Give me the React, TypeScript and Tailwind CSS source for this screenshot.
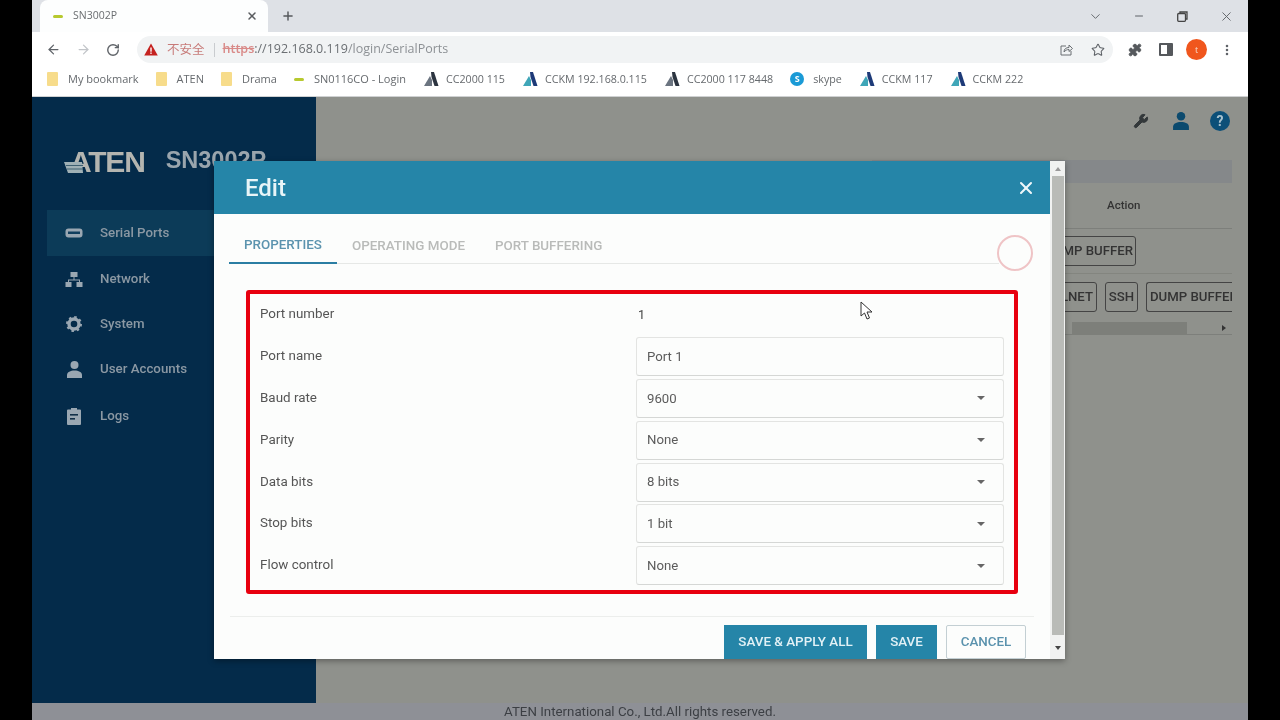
import { ArrowLeft, ArrowRight, RotateCw, Star, Puzzle, X, Plus, ChevronDown, Minus, MoreVertical, Wrench } from "lucide-react";

function Folder() {
  return <span className="w-[11px] h-[14px] bg-[#f7dc8b] rounded-[1px] shrink-0" />;
}
function Favicon() {
  return <span className="w-[10px] h-[3px] bg-[#b7c92f] rounded-sm shrink-0" />;
}
function AtenMark({ dark }: { dark?: boolean }) {
  return (
    <svg width="16" height="14" viewBox="0 0 16 14" className="shrink-0 -mr-[3px]">
      <path d="M8 0 L11 0 L15.5 14 L11.5 14 L8.5 5 Z" fill={dark ? "#2c3440" : "#1d3a78"} />
      <path d="M7 4 L1 14 L9 14 L9 8 Z" fill={dark ? "#6b7480" : "#3fa6b8"} />
    </svg>
  );
}
function Bookmark({ icon, label, large }: { icon: React.ReactNode; label: string; large?: boolean }) {
  return (
    <div className={`flex items-center gap-[10px] text-[#666a6e] whitespace-nowrap ${large ? "text-[11px]" : "text-[10.7px]"}`}>
      {icon}
      <span>{label}</span>
    </div>
  );
}
function SerialIcon() {
  return (
    <svg width="18" height="10" viewBox="0 0 18 10">
      <rect x="0.5" y="0.5" width="17" height="9" rx="3" fill="#9aa7b2" />
      <rect x="3" y="3.5" width="12" height="2.5" fill="#123f5e" />
    </svg>
  );
}
function NetworkIcon() {
  return (
    <svg width="18" height="15" viewBox="0 0 18 15" fill="#9aa7b2">
      <rect x="5.5" y="0" width="7" height="5" />
      <rect x="0.5" y="10" width="6" height="5" />
      <rect x="11.5" y="10" width="6" height="5" />
      <path d="M8.5 5h1v2.500H15V10h-1V8.500H4V10H3V7.500h5.500z" />
    </svg>
  );
}
function GearIcon() {
  return (
    <svg width="16" height="16" viewBox="0 0 16 16">
      <circle cx="8" cy="8" r="5" fill="none" stroke="#9aa7b2" strokeWidth="3.4" />
      <circle cx="8" cy="8" r="7" fill="none" stroke="#9aa7b2" strokeWidth="2" strokeDasharray="2.5 3" />
    </svg>
  );
}
function PersonIcon({ color, w, h }: { color: string; w: number; h: number }) {
  return (
    <svg width={w} height={h} viewBox="0 0 15 17" fill={color}>
      <circle cx="7.500" cy="4" r="4" />
      <path d="M0 17v-3c0-3 3.500-4.500 7.500-4.500S15 11 15 14v3z" />
    </svg>
  );
}
function LogIcon() {
  return (
    <svg width="14" height="18" viewBox="0 0 14 18">
      <path d="M1 2.500h3V1h6v1.500h3a1 1 0 0 1 1 1V17a1 1 0 0 1-1 1H1a1 1 0 0 1-1-1V3.500a1 1 0 0 1 1-1z" fill="#9aa7b2" />
      <rect x="3" y="7" width="8" height="1.600" fill="#123049" />
      <rect x="3" y="11" width="5" height="1.600" fill="#123049" />
    </svg>
  );
}
function NavItem({ icon, label, active, cls }: { icon: React.ReactNode; label: string; active?: boolean; cls: string }) {
  return (
    <div className={`flex items-center h-[46px] pl-[18px] ${cls} ${active ? "bg-[#0c3b58]" : ""}`}>
      <span className="w-[18px] flex justify-center">{icon}</span>
      <span className="ml-[17px] text-[13.3px] text-[#8b98a3] font-medium whitespace-nowrap">{label}</span>
    </div>
  );
}
function Field({ label, value, select, input }: { label: string; value: string; select?: boolean; input?: boolean }) {
  return (
    <div className="flex items-center h-[41.8px]">
      <span className="w-[376px] text-[13.4px] text-[#555] -mt-[1px]">{label}</span>
      {input || select ? (
        <div className="w-[368px] h-[39px] border border-[#e3e4e2] border-b-[#d5d7d5] rounded-[3px] flex items-center pl-[10px] pr-[18px] text-[13.2px] text-[#5c5c5c] justify-between">
          <span>{value}</span>
          {select && <span className="w-0 h-0 border-x-[4px] border-x-transparent border-t-[4px] border-t-[#666]" />}
        </div>
      ) : (
        <span className="text-[12.5px] text-[#444] ml-[2px]">{value}</span>
      )}
    </div>
  );
}

export default function App() {
  return (
    <div className="w-[1280px] h-[720px] bg-black overflow-hidden flex justify-center blur-[0.5px] font-['Roboto',sans-serif]">
      <div className="w-[1216px] h-full flex flex-col relative overflow-hidden">
        {/* tab strip */}
        <div className="h-[32px] bg-[#dee1e6] flex items-end shrink-0 font-['Open_Sans',sans-serif]">
          <div className="w-[228px] h-[32px] ml-[8px] bg-[#fdfefe] rounded-t-lg flex items-center pl-[13px] pr-[10px]">
            <Favicon />
            <span className="ml-[10px] text-[10.5px] text-[#6a6d70]">SN3002P</span>
            <X size={12} strokeWidth={3} className="ml-auto text-[#5a5d60]" />
          </div>
          <Plus size={14} strokeWidth={2.5} className="ml-[13px] mb-[9px] text-[#55585c]" />
          <div className="ml-auto flex items-center h-[32px] text-[#5f6368]">
            <ChevronDown size={15} strokeWidth={1.5} className="mr-[30px]" />
            <Minus size={12} strokeWidth={2} className="mr-[32px]" />
            <svg width="11" height="11" viewBox="0 0 11 11" fill="none" stroke="#444" strokeWidth="1.300" className="mr-[31px]">
              <rect x="0.700" y="2.500" width="7.800" height="7.800" rx="1" />
              <path d="M3 2.500V1h7v7H8.500" />
            </svg>
            <X size={15} strokeWidth={1.5} className="mr-[14px]" />
          </div>
        </div>
        {/* toolbar */}
        <div className="h-[32px] pt-[3px] bg-white flex items-center shrink-0 pl-[14px] font-['Open_Sans',sans-serif]">
          <ArrowLeft size={15} strokeWidth={2} className="text-[#5f6368]" />
          <ArrowRight size={15} strokeWidth={2} className="ml-[15px] text-[#c2c5c9]" />
          <RotateCw size={14} strokeWidth={2.4} className="ml-[15px] text-[#5f6368]" />
          <div className="ml-[17px] w-[976px] h-[27px] bg-[#f1f3f4] rounded-full flex items-center pl-[7px]">
            <svg width="14" height="13" viewBox="0 0 14 13"><path d="M7 0.500L13.800 12.500H0.200z" fill="#c5221f" /><rect x="6.300" y="4.500" width="1.400" height="4.200" fill="#fff" /><rect x="6.300" y="9.500" width="1.400" height="1.400" fill="#fff" /></svg>
            <span className="ml-[9px] text-[12.5px] text-[#c77a78] font-['Noto_Sans_CJK_SC',sans-serif]">不安全</span>
            <span className="ml-[9px] w-px h-[14px] bg-[#c9cccf]" />
            <span className="ml-[8px] text-[12.5px] whitespace-nowrap">
              <span className="text-[#d98a88] line-through font-semibold">https</span>
              <span className="text-[#6b6f73]">://192.168.0.119</span>
              <span className="text-[#8d9195]">/login/SerialPorts</span>
            </span>
            <svg width="13" height="13" viewBox="0 0 13 13" fill="none" stroke="#6b6f73" strokeWidth="1" className="ml-auto">
              <path d="M6 3H1v9h10V8" />
              <path d="M4 9c0-3 2-4.500 5-4.500V2l3.500 3.500L9 8.500V6.500C7 6.500 5.500 7.300 4 9z" />
            </svg>
            <Star size={14} strokeWidth={1.8} className="ml-[18px] mr-[8px] text-[#5f6368]" />
          </div>
          <Puzzle size={14} fill="#55585c" strokeWidth={1.500} className="ml-[15px] text-[#55585c]" />
          <span className="ml-[17px] w-[14px] h-[13px] border-2 border-[#55585c] border-r-[6px] rounded-[1px]" />
          <span className="ml-[13px] w-[21px] h-[21px] rounded-full bg-[#f0561d] flex items-center justify-center text-[9px] text-[#f7d9c8]">t</span>
          <MoreVertical size={14} strokeWidth={2.4} className="ml-[13px] text-[#5f6368]" />
        </div>
        {/* bookmarks */}
        <div className="h-[33px] pb-[2px] bg-white flex items-center shrink-0 pl-[15px] gap-[17px] border-b border-[#cfd1d2] font-['Open_Sans',sans-serif]">
          <Bookmark large icon={<Folder />} label="My bookmark" />
          <Bookmark large icon={<Folder />} label="ATEN" />
          <Bookmark large icon={<Folder />} label="Drama" />
          <Bookmark large icon={<Favicon />} label="SN0116CO - Login" />
          <Bookmark icon={<AtenMark dark />} label="CC2000 115" />
          <Bookmark icon={<AtenMark />} label="CCKM 192.168.0.115" />
          <Bookmark icon={<AtenMark dark />} label="CC2000 117 8448" />
          <Bookmark icon={<span className="w-[14px] h-[14px] -mr-[1px] rounded-full bg-[#1a9ad6] text-white text-[9px] font-bold flex items-center justify-center">S</span>} label="skype" />
          <Bookmark icon={<AtenMark />} label="CCKM 117" />
          <Bookmark icon={<AtenMark />} label="CCKM 222" />
        </div>
        {/* page */}
        <div className="flex-1 flex flex-col min-h-0 relative">
          <div className="flex-1 flex min-h-0">
            <aside className="w-[284px] bg-[#042b4a] shrink-0 pt-[46px]">
              <div className="flex items-center pl-[32px] h-[36px] whitespace-nowrap relative">
                <span className="ml-[6px] text-[30px] font-bold tracking-[-1.2px] text-[#b4b5b0] font-['Liberation_Sans',sans-serif]">ATEN</span>
                <span className="ml-[21px] text-[23.5px] font-bold text-[#9aa5ad] font-['Liberation_Sans',sans-serif]">SN3002P</span>
                <svg width="22" height="11" viewBox="0 0 22 11" className="absolute left-[32px] top-[19px]">
                  <path d="M0 0H18L19 11H4z" fill="#9fb0b5" />
                  <path d="M2 3.500H19M3 7H19" stroke="#3f6071" strokeWidth="1" />
                </svg>
              </div>
              <div className="mt-[31px] ml-[15px] flex flex-col">
                <NavItem cls="" active icon={<SerialIcon />} label="Serial Ports" />
                <NavItem cls="" icon={<NetworkIcon />} label="Network" />
                <NavItem cls="-mt-[1px]" icon={<GearIcon />} label="System" />
                <NavItem cls="-mt-[1px]" icon={<PersonIcon color="#9aa7b2" w={15} h={17} />} label="User Accounts" />
                <NavItem cls="mt-[1px]" icon={<LogIcon />} label="Logs" />
              </div>
            </aside>
            <main className="flex-1 bg-[#8f918c] flex flex-col min-w-0">
              <div className="h-[48px] flex items-center justify-end pr-[18px] shrink-0">
                <Wrench size={16} fill="#33383a" strokeWidth={1.500} className="text-[#33383a]" />
                <span className="ml-[23px]"><PersonIcon color="#0c4a6e" w={18} h={18} /></span>
                <span className="ml-[20px] w-[20px] h-[20px] rounded-full bg-[#0c4f78] flex items-center justify-center text-[14px] font-bold text-[#a9c2cf]">?</span>
              </div>
              <div className="flex-1 flex flex-col items-end pr-[16px] pt-[15px]">
                <div className="w-[360px] shrink-0 flex flex-col overflow-hidden text-[#333] font-medium">
                  <div className="h-[23px] bg-[#85888a] shrink-0" />
                  <div className="h-[46px] border-b border-[#7d7f7b] flex items-center text-[11.5px] pl-[235px]">Action</div>
                  <div className="h-[45px] border-b border-[#83857f] flex items-center pl-[164px] text-[13.2px] whitespace-nowrap">
                    <span className="h-[30px] w-[100px] border border-[#444] rounded-[3px] flex items-center justify-end pr-[2px]">DUMP BUFFER</span>
                  </div>
                  <div className="h-[48px] pb-[3px] flex items-center pl-[179px] gap-[8px] text-[13.2px] whitespace-nowrap">
                    <span className="h-[30px] w-[46px] border border-[#444] rounded-[3px] flex items-center justify-end pr-[3px] shrink-0">TELNET</span>
                    <span className="h-[30px] w-[33px] border border-[#444] rounded-[3px] flex items-center justify-center shrink-0">SSH</span>
                    <span className="h-[30px] w-[86px] pl-[3px] border border-[#444] rounded-l-[3px] border-r-0 flex items-center overflow-hidden shrink-0">DUMP BUFFER</span>
                  </div>
                  <div className="h-[13px] flex items-center border-b border-[#7d7f7b] shrink-0">
                    <div className="ml-[200px] w-[115px] h-[13px] bg-[#7d7f7a]" />
                    <span className="ml-auto mr-[6px] w-0 h-0 border-y-[3px] border-y-transparent border-l-[4px] border-l-[#333]" />
                  </div>
                </div>
              </div>
            </main>
          </div>
          <div className="h-[17px] bg-[#8e9096] flex items-center justify-center text-[13.3px] text-[#3c3f44] whitespace-nowrap shrink-0">
            ATEN International Co., Ltd.All rights reserved.
          </div>
          {/* modal */}
          <div className="absolute left-[182px] top-[64px] w-[851px] h-[498px] bg-[#fcfdfc] flex shadow-[0_2px_6px_rgba(0,0,0,0.35)]">
            <div className="w-[836px] flex flex-col overflow-hidden relative">
              <div className="h-[53px] bg-[#2585a8] flex items-center justify-between pl-[31px] pr-[14px] shrink-0">
                <span className="text-[24px] font-medium text-[#e8f5f8]">Edit</span>
                <X size={20} strokeWidth={2.5} className="text-[#eef7fa]" />
              </div>
              <div className="mx-[15px] mt-[13px] h-[37px] border-b border-[#e6e8e6] flex shrink-0 w-[770px] text-[13.4px] font-medium">
                <div className="w-[108px] h-[37px] pt-[2px] border-b-2 border-[#2b7ea3] flex items-center justify-center text-[#5b93ae]">PROPERTIES</div>
                <div className="ml-[15px] h-[37px] pt-[2px] flex items-center text-[#b9bbb9]">OPERATING MODE</div>
                <div className="ml-[30px] h-[37px] pt-[2px] flex items-center text-[#b9bbb9]">PORT BUFFERING</div>
              </div>
              <div className="ml-[32px] mt-[26px] w-[772px] h-[304px] border-[4px] border-[#e8000f] rounded-[3px] pl-[10px] flex flex-col shrink-0">
                <Field label="Port number" value="1" />
                <Field label="Port name" value="Port 1" input />
                <Field label="Baud rate" value="9600" select />
                <Field label="Parity" value="None" select />
                <Field label="Data bits" value="8 bits" select />
                <Field label="Stop bits" value="1 bit" select />
                <Field label="Flow control" value="None" select />
              </div>
              <div className="mx-[16px] mt-[22px] border-t border-[#eceeec] shrink-0" />
              <div className="flex justify-end pr-[24px] mt-[8px] gap-[9px] text-[13.4px] font-medium">
                <span className="w-[143px] h-[34px] bg-[#2585a8] text-[#e2f1f6] flex items-center justify-center">SAVE &amp; APPLY ALL</span>
                <span className="w-[61px] h-[34px] bg-[#2585a8] text-[#e2f1f6] flex items-center justify-center">SAVE</span>
                <span className="w-[80px] h-[34px] border border-[#c3cfd3] rounded-[2px] text-[#5a92ad] flex items-center justify-center">CANCEL</span>
              </div>
              <div className="absolute left-[783px] top-[74px] w-[36px] h-[36px] rounded-full border-2 border-[#efc4c6]" />
              <svg width="14" height="20" viewBox="0 0 14 20" className="absolute left-[646px] top-[140px]">
                <path d="M1 1 L1 15 L4.500 12 L7 18 L9.500 17 L7 11 L12 11 Z" fill="#fff" stroke="#333" strokeWidth="1" />
              </svg>
            </div>
            <div className="w-[15px] bg-[#f1f2f1] flex flex-col items-center">
              <span className="mt-[6px] w-0 h-0 border-x-[3px] border-x-transparent border-b-[4px] border-b-[#999]" />
              <div className="mt-[5px] w-[12px] h-[459px] bg-[#b9bbb7]" />
              <span className="mt-[11px] w-0 h-0 border-x-[3px] border-x-transparent border-t-[4px] border-t-[#444]" />
            </div>
          </div>
        </div>
      </div>
    </div>
  );
}
